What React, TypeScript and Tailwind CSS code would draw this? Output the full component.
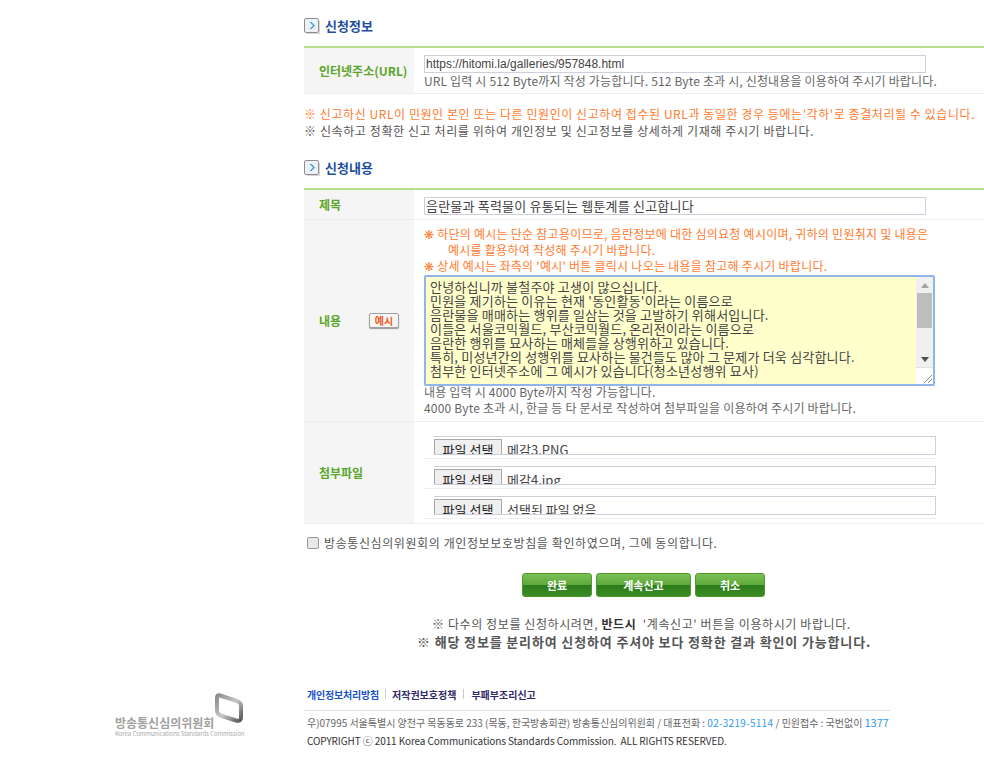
const gulim = { fontFamily: '"Noto Sans CJK KR", "Liberation Sans", sans-serif' };

function SectionTitle({ children }: { children: string }) {
  return (
    <div className="flex h-[16px] items-center gap-[5px]">
      <svg width="16" height="17" viewBox="0 0 16 17" className="shrink-0">
        <rect x="0.5" y="0.5" width="14" height="14" rx="1.5" fill="#eef1f4" stroke="#8b8f94" />
        <path d="M15 3v12H3v1h13V3z" fill="#d5d5d5" />
        <path d="M5.5 4l3.5 3.5L5.5 11h2L11 7.5 7.5 4z" fill="#3da5d9" />
      </svg>
      <span className="text-[13px] font-bold leading-[16px] text-[#1f4e9c]">{children}</span>
    </div>
  );
}

function Label({ children }: { children: string }) {
  return <span className="pl-[15px] text-[12px] font-bold text-[#5ba52a]">{children}</span>;
}

function FileRow({ name }: { name: string }) {
  return (
    <div className="border-b border-[#eeeeee] pb-[3px]">
      <div className="ml-[10px] h-[19px] w-[502px] overflow-hidden border-y border-r border-[#ccd0da]">
        <div className="flex items-start">
          <span className="mt-[2px] flex h-[22px] w-[68px] items-center justify-center border border-[#a9a9a9] bg-[#efefef] pb-[2px] text-[13px] leading-none text-[#222222]">파일 선택</span>
          <span className="ml-[5px] mt-[3px] text-[13px] leading-[20px] text-[#444444]">{name}</span>
        </div>
      </div>
    </div>
  );
}

function GreenButton({ w, children }: { w: string; children: string }) {
  return (
    <button className={`${w} flex h-[24px] items-center justify-center rounded-[3px] border border-[#4e9a2d] bg-[linear-gradient(#7cc056_0%,#5fa93a_48%,#2b7d1c_52%,#3c8c25_100%)] text-[11px] font-bold text-white`}>
      {children}
    </button>
  );
}

const contentLines = [
  "안녕하십니까 불철주야 고생이 많으십니다.",
  "민원을 제기하는 이유는 현재 '동인활동'이라는 이름으로",
  "음란물을 매매하는 행위를 일삼는 것을 고발하기 위해서입니다.",
  "이들은 서울코믹월드, 부산코믹월드, 온리전이라는 이름으로",
  "음란한 행위를 묘사하는 매체들을 상행위하고 있습니다.",
  "특히, 미성년간의 성행위를 묘사하는 물건들도 많아 그 문제가 더욱 심각합니다.",
  "첨부한 인터넷주소에 그 예시가 있습니다(청소년성행위 묘사)",
];

export default function App() {
  return (
    <div className="flex h-[767px] w-[984px] overflow-hidden bg-white" style={gulim}>
      <div className="w-[304px] shrink-0">
        <div className="ml-[115px] mt-[693px] flex w-[130px] flex-col">
          <div className="flex h-[32px] items-end justify-end pr-[1px]">
            <svg width="30" height="33" viewBox="0 0 30 33">
              <defs>
                <linearGradient id="lg" x1="0" y1="0" x2="1" y2="1">
                  <stop offset="0" stopColor="#8a8a8a" />
                  <stop offset="0.5" stopColor="#c8c8c8" />
                  <stop offset="1" stopColor="#555555" />
                </linearGradient>
              </defs>
              <path d="M6 3.5 L23 9 Q27 10.5 27 14 L27 25 Q27 30 22 28.5 L8 24 Q3 22.5 3 18 L3 6 Q3 2.5 6 3.5Z" fill="none" stroke="url(#lg)" strokeWidth="4" />
            </svg>
          </div>
          <div className="-mt-[9px] whitespace-nowrap text-[12px] font-bold leading-[14px] text-[#a0a0a0]">방송통신심의위원회</div>
          <div className="whitespace-nowrap text-[6px] leading-[8px] tracking-[-0.05px] text-[#aaaaaa]">Korea Communications Standards Commission</div>
        </div>
      </div>

      <div className="w-[680px]">
        <div className="pt-[18px]"><SectionTitle>신청정보</SectionTitle></div>

        <div className="mt-[12px] border-t-[2px] border-[#b9dc8e]">
          <div className="flex h-[46px] border-b border-[#eeeeee]">
            <div className="flex w-[110px] items-center bg-[#f5f5f5]"><Label>인터넷주소(URL)</Label></div>
            <div className="pl-[10px] pt-[7px]">
              <div className="flex h-[18px] w-[502px] items-center border border-[#ccd0da] pl-[1px] font-['Liberation_Sans'] text-[12px] text-[#444444]">https://hitomi.la/galleries/957848.html</div>
              <div className="whitespace-nowrap text-[12px] leading-[15px] tracking-[0.16px] text-[#666666]">URL 입력 시 512 Byte까지 작성 가능합니다. 512 Byte 초과 시, 신청내용을 이용하여 주시기 바랍니다.</div>
            </div>
          </div>
        </div>

        <div className="mt-[11px] whitespace-nowrap text-[12px] leading-[17px] tracking-[0.57px] text-[#ff7b2e]">※ 신고하신 URL이 민원인 본인 또는 다른 민원인이 신고하여 접수된 URL과 동일한 경우 등에는'각하'로 종결처리될 수 있습니다.</div>
        <div className="whitespace-nowrap text-[12px] leading-[17px] tracking-[0.6px] text-[#555555]">※ 신속하고 정확한 신고 처리를 위하여 개인정보 및 신고정보를 상세하게 기재해 주시기 바랍니다.</div>

        <div className="mt-[21px]"><SectionTitle>신청내용</SectionTitle></div>

        <div className="mt-[12px] border-t-[2px] border-[#b9dc8e]">
          <div className="flex h-[30px] border-b border-[#eeeeee]">
            <div className="flex w-[110px] items-center bg-[#f5f5f5]"><Label>제목</Label></div>
            <div className="pl-[10px] pt-[7px]">
              <div className="flex h-[18px] w-[502px] items-center border border-[#ccd0da] pl-[1px] text-[13px] tracking-[0.2px] text-[#444444]">음란물과 폭력물이 유통되는 웹툰계를 신고합니다</div>
            </div>
          </div>

          <div className="flex h-[202px] border-b border-[#eeeeee]">
            <div className="flex w-[110px] items-center justify-between bg-[#f5f5f5] pr-[15px]">
              <Label>내용</Label>
              <span className="flex h-[15px] w-[30px] items-center justify-center rounded-[2px] border border-[#a0a0a0] bg-[#f5f5f5] text-[10px] font-bold leading-none text-[#f0591e] shadow-[0_1px_1px_#999999]">예시</span>
            </div>
            <div className="pl-[10px] pt-[6px]">
              <div className="whitespace-nowrap text-[12px] leading-[16px] tracking-[0.25px] text-[#ff7b2e]">
                <div>❋ 하단의 예시는 단순 참고용이므로, 음란정보에 대한 심의요청 예시이며, 귀하의 민원취지 및 내용은</div>
                <div className="pl-[24px]">예시를 활용하여 작성해 주시기 바랍니다.</div>
                <div>❋ 상세 예시는 좌측의 '예시' 버튼 클릭시 나오는 내용을 참고해 주시기 바랍니다.</div>
              </div>
              <div className="mt-[1px] flex h-[111px] w-[511px] rounded-[2px] border-[2px] border-[#8fb5ec] bg-[#ffffcc]">
                <div className="w-[492px] overflow-hidden pl-[4px] pt-[3px] text-[13px] leading-[14px] text-[#444444]">
                  {contentLines.map((l) => (
                    <div key={l} className="whitespace-nowrap tracking-[0.2px]">{l}</div>
                  ))}
                </div>
                <div className="flex w-[17px] flex-col bg-[#f0f0f0]">
                  <div className="flex h-[16px] items-center justify-center">
                    <svg width="8" height="5" viewBox="0 0 8 5"><path d="M4 0l4 5H0z" fill="#a3a3a3" /></svg>
                  </div>
                  <div className="ml-[1px] h-[35px] w-[15px] bg-[#bdbdbd]" />
                  <div className="flex flex-1 items-end justify-center pb-[5px]">
                    <svg width="8" height="5" viewBox="0 0 8 5"><path d="M0 0h8L4 5z" fill="#505050" /></svg>
                  </div>
                  <div className="flex h-[17px] items-end justify-end border-t border-[#e2e2e2] bg-white pb-[1px] pr-[1px]">
                    <svg width="8" height="8" viewBox="0 0 8 8"><path d="M0 8L8 0M4 8L8 4" stroke="#8a8a8a" strokeWidth="1" /></svg>
                  </div>
                </div>
              </div>
              <div className="-mt-[2px] whitespace-nowrap text-[12px] leading-[16px] tracking-[0.2px] text-[#666666]">
                <div>내용 입력 시 4000 Byte까지 작성 가능합니다.</div>
                <div>4000 Byte 초과 시, 한글 등 타 문서로 작성하여 첨부파일을 이용하여 주시기 바랍니다.</div>
              </div>
            </div>
          </div>

          <div className="flex h-[102px] border-b border-[#eeeeee]">
            <div className="flex w-[110px] items-center bg-[#f5f5f5]"><Label>첨부파일</Label></div>
            <div className="w-[522px] pl-[10px] pt-[14px]">
              <div className="flex flex-col gap-[7px]">
                <FileRow name="메감3.PNG" />
                <FileRow name="메감4.jpg" />
                <FileRow name="선택된 파일 없음" />
              </div>
            </div>
          </div>
        </div>

        <div className="mt-[11px] flex h-[16px] items-center gap-[5px] pl-[3px]">
          <span className="h-[12px] w-[12px] rounded-[2px] border border-[#999999] bg-[#e8e8e8]" />
          <span className="whitespace-nowrap text-[12px] tracking-[0.6px] text-[#555555]">방송통신심의위원회의 개인정보보호방침을 확인하였으며, 그에 동의합니다.</span>
        </div>

        <div className="ml-[218px] mt-[22px] flex gap-[4px]">
          <GreenButton w="w-[70px]">완료</GreenButton>
          <GreenButton w="w-[95px]">계속신고</GreenButton>
          <GreenButton w="w-[70px]">취소</GreenButton>
        </div>

        <div className="ml-[128px] mt-[18px] whitespace-nowrap text-[12px] leading-[18px] tracking-[0.6px] text-[#555555]">※ 다수의 정보를 신청하시려면, <b className="text-[#333333]">반드시</b>&nbsp; '계속신고' 버튼을 이용하시기 바랍니다.</div>
        <div className="ml-[113px] whitespace-nowrap text-[13px] font-bold leading-[18px] tracking-[0.85px] text-[#555555]">※ 해당 정보를 분리하여 신청하여 주셔야 보다 정확한 결과 확인이 가능합니다.</div>

        <div className="mt-[35px] flex h-[16px] items-center whitespace-nowrap pl-[3px] text-[10px] font-bold">
          <span className="tracking-[-0.2px] text-[#1b53c9]">개인정보처리방침</span>
          <span className="mx-[6px] h-[10px] w-px bg-[#cccccc]" />
          <span className="text-[#2f2a6b]">저작권보호정책</span>
          <span className="mx-[7px] h-[10px] w-px bg-[#cccccc]" />
          <span className="text-[#2f2a6b]">부패부조리신고</span>
        </div>
        <div className="mt-[8px] w-[586px] border-t border-[#dddddd] pl-[3px] pt-[4px]">
          <div className="whitespace-nowrap text-[10px] leading-[15px] tracking-[-0.02px] text-[#666666]">
            우)07995 서울특별시 양천구 목동동로 233 (목동, 한국방송회관) 방송통신심의위원회 / 대표전화 : <span className="tracking-[0.3px] text-[#2f9bea]">02-3219-5114</span> / 민원접수 : 국번없이 <span className="text-[11px] text-[#2f9bea]">1377</span>
          </div>
          <div className="whitespace-nowrap pt-[3px] text-[10px] leading-[15px] tracking-[-0.1px] text-[#333333]">COPYRIGHT ⓒ 2011 Korea Communications Standards Commission.&nbsp; ALL RIGHTS RESERVED.</div>
        </div>
      </div>
    </div>
  );
}
